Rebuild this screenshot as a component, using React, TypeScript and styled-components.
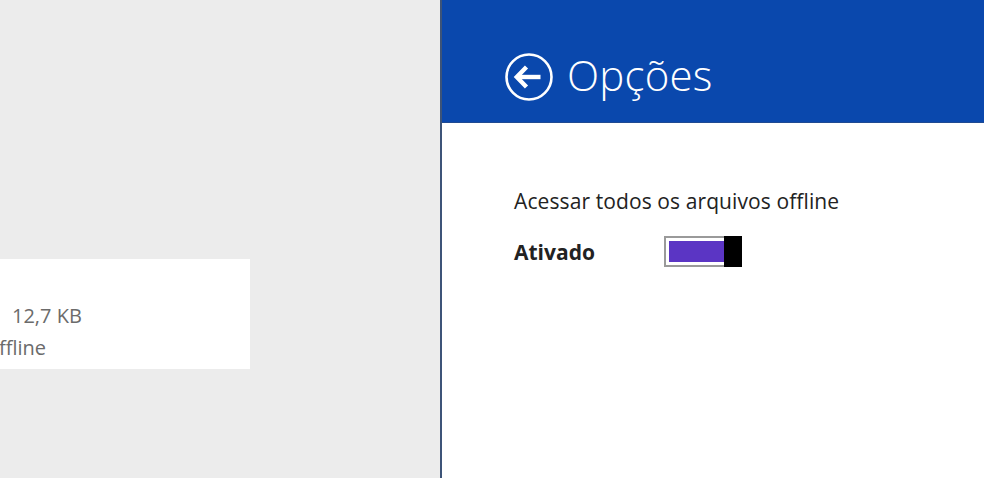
import React from 'react';
import styled, { createGlobalStyle } from 'styled-components';

const GlobalStyle = createGlobalStyle`
  html, body {
    margin: 0;
    padding: 0;
    width: 984px;
    height: 478px;
    overflow: hidden;
  }
  body {
    font-family: "Open Sans", "Noto Sans", "Liberation Sans", sans-serif;
  }
`;

const Screen = styled.div`
  display: flex;
  width: 984px;
  height: 478px;
`;

const FilesPane = styled.div`
  width: 440px;
  background: #ececec;
  padding-top: 259px;
  box-sizing: border-box;
`;

const FileCard = styled.div`
  width: 250px;
  height: 110px;
  background: #ffffff;
  overflow: hidden;
  padding-top: 41px;
  box-sizing: border-box;
  color: #6b6b6b;
  font-size: 20px;
  line-height: 32px;
`;

const CardLine = styled.div<{ $indent: number }>`
  margin-left: ${(p) => p.$indent}px;
  white-space: nowrap;
`;

const Flyout = styled.div`
  flex: 1;
  display: flex;
  flex-direction: column;
  background: #ffffff;
  border-left: 2px solid #3d5478;
`;

const Header = styled.div`
  height: 123px;
  background: #0a48ad;
  display: flex;
  align-items: center;
  gap: 14px;
  padding: 31px 0 0 63px;
  box-sizing: border-box;
  border-bottom: 1px solid #1f4a92;
`;

const BackButton = styled.button`
  width: 48px;
  height: 48px;
  padding: 0;
  border: none;
  background: none;
  display: flex;
  cursor: pointer;
`;

const Title = styled.h1`
  margin: 0 0 4px 0;
  color: #ffffff;
  font-weight: 300;
  font-size: 42px;
  letter-spacing: 0.2px;
`;

const Body = styled.div`
  padding: 64px 0 0 72px;
  color: #222222;
`;

const OptionLabel = styled.div`
  font-size: 21px;
  line-height: 28px;
  letter-spacing: 0.1px;
`;

const ToggleRow = styled.div`
  display: flex;
  align-items: center;
  margin-top: 21px;
`;

const StateText = styled.span`
  width: 150px;
  font-size: 21px;
  font-weight: 700;
`;

const Toggle = styled.div`
  display: flex;
  height: 31px;
  cursor: pointer;
`;

const Track = styled.div`
  width: 60px;
  border: 2px solid #9a9a9a;
  border-right: none;
  padding: 3px 0 3px 3px;
  box-sizing: border-box;
  display: flex;
`;

const Fill = styled.div`
  flex: 1;
  background: #5b35c4;
`;

const Thumb = styled.div`
  width: 18px;
  background: #000000;
`;

function BackIcon() {
  return (
    <svg width="48" height="48" viewBox="0 0 48 48">
      <circle cx="24" cy="24" r="22.5" fill="none" stroke="#ffffff" strokeWidth="2.6" />
      <path d="M12.5 24 H35.5" stroke="#ffffff" strokeWidth="4.4" fill="none" />
      <path d="M21.5 14 L11.8 24 L21.5 34" stroke="#ffffff" strokeWidth="4.4" fill="none" />
    </svg>
  );
}

export default function App() {
  return (
    <>
      <GlobalStyle />
      <Screen>
        <FilesPane>
          <FileCard>
            <CardLine $indent={12}>12,7 KB</CardLine>
            <CardLine $indent={-13}>offline</CardLine>
          </FileCard>
        </FilesPane>
        <Flyout>
          <Header>
            <BackButton aria-label="Voltar">
              <BackIcon />
            </BackButton>
            <Title>Opções</Title>
          </Header>
          <Body>
            <OptionLabel>Acessar todos os arquivos offline</OptionLabel>
            <ToggleRow>
              <StateText>Ativado</StateText>
              <Toggle>
                <Track>
                  <Fill />
                </Track>
                <Thumb />
              </Toggle>
            </ToggleRow>
          </Body>
        </Flyout>
      </Screen>
    </>
  );
}
